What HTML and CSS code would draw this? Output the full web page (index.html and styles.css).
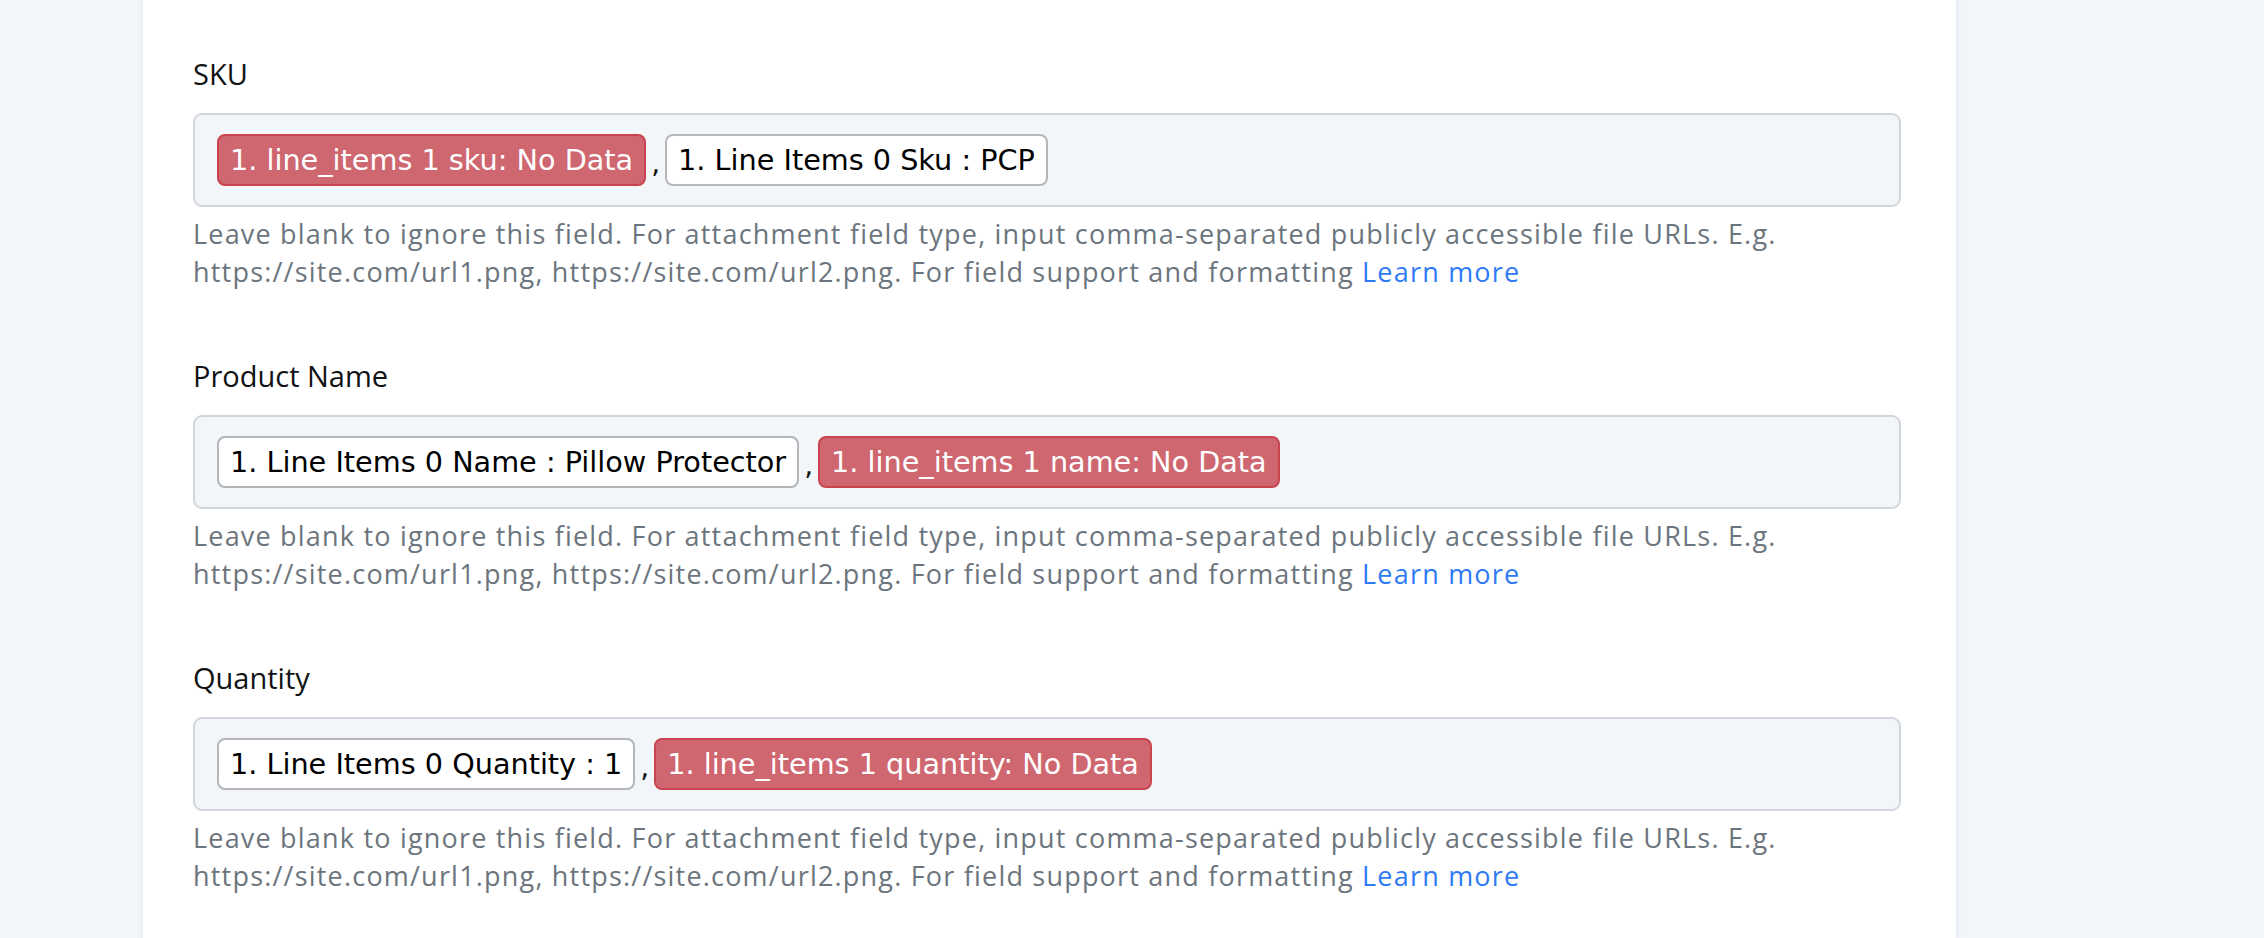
FILE: index.html
```html
<!DOCTYPE html>
<html lang="en">
<head>
<meta charset="utf-8">
<title>Field mapping</title>
<link rel="stylesheet" href="styles.css">
</head>
<body>
<div class="page">
  <main class="card">
    <section class="field">
      <div class="label">SKU</div>
      <div class="box">
        <span class="tag tag-error">1. line_items 1 sku: No Data</span><span class="sep">,</span><span class="tag">1. Line Items 0 Sku : PCP</span>
      </div>
      <p class="help">Leave blank to ignore this field. For attachment field type, input comma-separated publicly accessible file URLs. E.g. https://site.com/url1.png, https://site.com/url2.png. For field support and formatting <a class="link" href="#">Learn more</a></p>
    </section>
    <section class="field">
      <div class="label">Product Name</div>
      <div class="box">
        <span class="tag">1. Line Items 0 Name : Pillow Protector</span><span class="sep">,</span><span class="tag tag-error">1. line_items 1 name: No Data</span>
      </div>
      <p class="help">Leave blank to ignore this field. For attachment field type, input comma-separated publicly accessible file URLs. E.g. https://site.com/url1.png, https://site.com/url2.png. For field support and formatting <a class="link" href="#">Learn more</a></p>
    </section>
    <section class="field">
      <div class="label">Quantity</div>
      <div class="box">
        <span class="tag">1. Line Items 0 Quantity : 1</span><span class="sep">,</span><span class="tag tag-error">1. line_items 1 quantity: No Data</span>
      </div>
      <p class="help">Leave blank to ignore this field. For attachment field type, input comma-separated publicly accessible file URLs. E.g. https://site.com/url1.png, https://site.com/url2.png. For field support and formatting <a class="link" href="#">Learn more</a></p>
    </section>
  </main>
</div>
</body>
</html>
```
FILE: styles.css
```css
* { box-sizing: border-box; }
html, body { margin: 0; padding: 0; }
body {
  background: #f3f6f9;
  font-family: "Open Sans", Lato, sans-serif;
  height: 938px;
  overflow: hidden;
}
.page {
  display: flex;
  padding-left: 143px;
  height: 938px;
}
.card {
  width: 1813px;
  background: #ffffff;
  padding: 54px 55px 0 50px;
  box-shadow: 0 0 6px rgba(70, 90, 170, 0.14);
}
.field {
  margin-bottom: 65px;
}
.label {
  font-size: 29px;
  line-height: 40px;
  color: #111315;
  margin-bottom: 19px;
}
.box {
  display: flex;
  align-items: center;
  height: 94px;
  padding: 19px 22px;
  background: #f3f6f9;
  border: 2px solid #d2d6dc;
  border-radius: 9px;
}
.tag {
  display: inline-block;
  font-family: "DejaVu Sans", Verdana, sans-serif;
  font-size: 28.7px;
  line-height: 34px;
  padding: 7px 11px;
  border: 2px solid #b3b6ba;
  border-radius: 8px;
  background: #ffffff;
  color: #000000;
  white-space: nowrap;
}
.tag-error {
  background: #cf6770;
  border-color: #c9444e;
  color: #ffffff;
}
.sep {
  font-family: "DejaVu Sans", Verdana, sans-serif;
  font-size: 28px;
  line-height: 34px;
  margin: 8px 5px 0 5px;
  color: #111;
}
.help {
  margin: 8px 0 0 0;
  font-size: 27px;
  letter-spacing: 1.2px;
  line-height: 38px;
  color: #6c757d;
}
.link {
  color: #2f7af5;
  text-decoration: none;
}
```
